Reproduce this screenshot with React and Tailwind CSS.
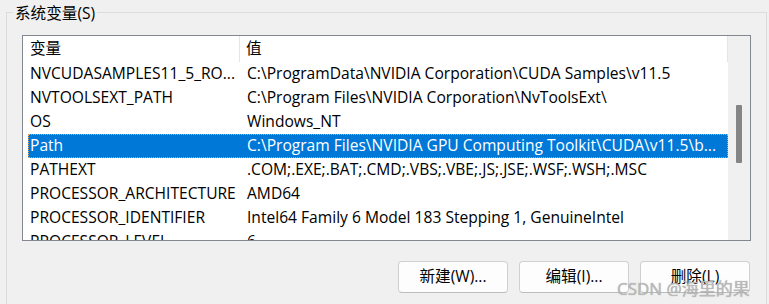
import React from 'react';

const rows = [
  { name: 'NVCUDASAMPLES11_5_RO...', value: 'C:\\ProgramData\\NVIDIA Corporation\\CUDA Samples\\v11.5' },
  { name: 'NVTOOLSEXT_PATH', value: 'C:\\Program Files\\NVIDIA Corporation\\NvToolsExt\\' },
  { name: 'OS', value: 'Windows_NT' },
  { name: 'Path', value: 'C:\\Program Files\\NVIDIA GPU Computing Toolkit\\CUDA\\v11.5\\b...', selected: true },
  { name: 'PATHEXT', value: '.COM;.EXE;.BAT;.CMD;.VBS;.VBE;.JS;.JSE;.WSF;.WSH;.MSC' },
  { name: 'PROCESSOR_ARCHITECTURE', value: 'AMD64' },
  { name: 'PROCESSOR_IDENTIFIER', value: 'Intel64 Family 6 Model 183 Stepping 1, GenuineIntel' },
  { name: 'PROCESSOR_LEVEL', value: '6' },
];

const buttons = ['新建(W)...', '编辑(I)...', '删除(L)'];

const App = () => {
  return (
    <div className="relative w-[769px] h-[304px] overflow-hidden bg-[#f0f0f0] text-[15.6px] text-black font-['Open_Sans','Noto_Sans_CJK_SC',sans-serif]">
      {/* Group box */}
      <div className="relative ml-[6px] mt-[12px] w-[761px] h-[320px] border border-[#dcdcdc]">
        <div className="absolute left-[6px] top-[-9px] bg-[#f0f0f0] px-[2px] leading-[18px]">系统变量(S)</div>

        {/* List view */}
        <div className="ml-[15px] mt-[22px] w-[729px] h-[206px] border border-[#828790] bg-white flex">
          <div className="w-[705px] h-full overflow-hidden">
            <div className="flex h-[26px] items-center">
              <div className="w-[217px] h-full flex items-center pl-[7px] border-r border-[#e5e5e5]">变量</div>
              <div className="flex-1 h-full flex items-center pl-[6px] border-r border-[#e5e5e5]">值</div>
            </div>
            {rows.map((r) => (
              <div key={r.name} className="h-[24px] pl-[5px]">
                <div
                  className={`flex h-full items-center whitespace-nowrap ${
                    r.selected ? 'bg-[#0078d7] text-white outline outline-1 outline-dotted outline-offset-[-1px] outline-[#e8a25a]' : ''
                  }`}
                >
                  <div className="w-[212px] pl-[2px] overflow-hidden">{r.name}</div>
                  <div className="flex-1 pl-[7px] overflow-hidden">{r.value}</div>
                </div>
              </div>
            ))}
          </div>
          {/* Scrollbar */}
          <div className="flex-1 bg-[#f0f0f0] flex justify-center pt-[69px]">
            <div className="w-[6px] h-[58px] bg-[#858585] rounded-[1px]" />
          </div>
        </div>

        {/* Buttons */}
        <div className="flex justify-end gap-[11px] mt-[20px] pr-[16px]">
          {buttons.map((b) => (
            <button
              key={b}
              className="w-[110px] h-[32px] rounded-[4px] border border-[#d0d0d0] border-b-[#bdbdbd] bg-[#fdfdfd] text-[15.6px] flex items-center justify-center"
            >
              {b}
            </button>
          ))}
        </div>
      </div>

      {/* Watermark */}
      <div className="absolute left-[617px] top-[278px] text-[17px] leading-[22px] text-[#b9b9b9] [text-shadow:0_0_1px_rgba(90,90,90,0.5)]">
        CSDN @海里的果
      </div>
    </div>
  );
};

export default App;
